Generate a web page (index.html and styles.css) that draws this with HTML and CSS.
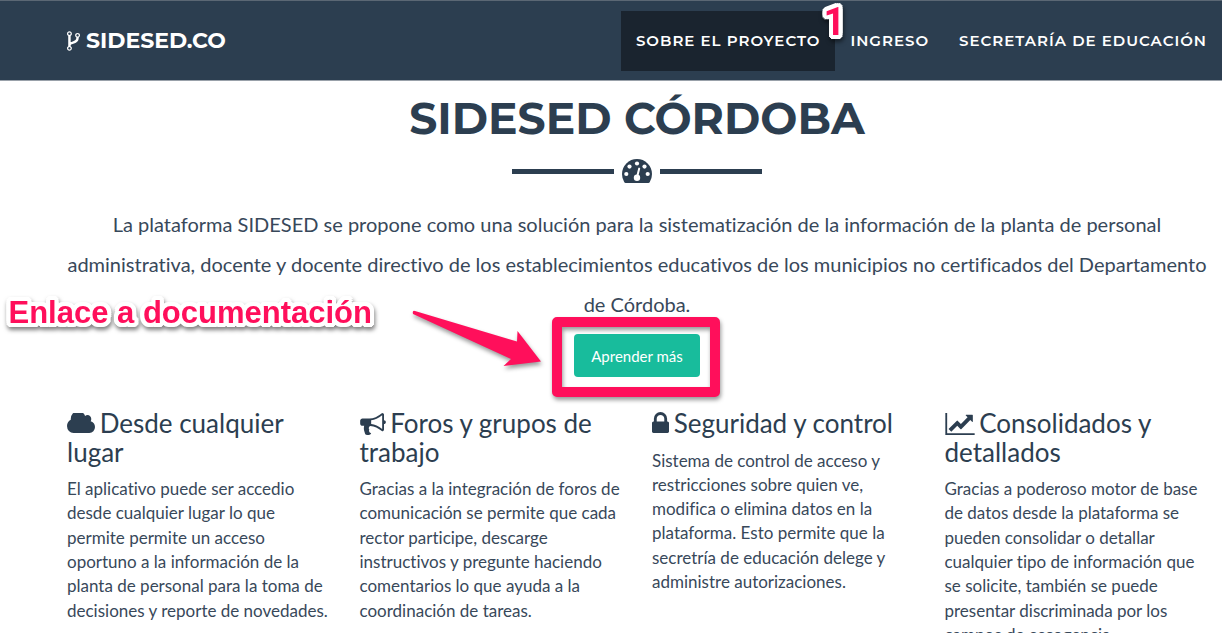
FILE: index.html
```html
<!DOCTYPE html>
<html lang="es">
<head>
<meta charset="utf-8">
<title>SIDESED Córdoba</title>
<link rel="stylesheet" href="styles.css">
</head>
<body>
<header class="navbar">
  <a class="brand" href="#">
    <svg class="brand-icon" viewBox="384 128 1024 1536" aria-hidden="true"><path d="M672 1472q0-40-28-68t-68-28-68 28-28 68 28 68 68 28 68-28 28-68zm0-1152q0-40-28-68t-68-28-68 28-28 68 28 68 68 28 68-28 28-68zm640 128q0-40-28-68t-68-28-68 28-28 68 28 68 68 28 68-28 28-68zm96 0q0 52-26 96.5t-70 69.5q-2 287-226 414-67 38-203 81-128 40-169.5 71t-41.5 100v26q44 25 70 69.5t26 96.5q0 80-56 136t-136 56-136-56-56-136q0-52 26-96.5t70-69.5v-820q-44-25-70-69.5t-26-96.5q0-80 56-136t136-56 136 56 56 136q0 52-26 96.5t-70 69.5v497q54-26 154-57 55-17 87.5-29.5t70.5-31 59-39.5 40.5-51 28-69.5 8.5-91.5q-44-25-70-69.5t-26-96.5q0-80 56-136t136-56 136 56 56 136z"/></svg>
    <span>SIDESED.CO</span>
  </a>
  <nav class="menu">
    <a class="menu-link active" href="#sobre">SOBRE EL PROYECTO<span class="step note">1</span></a>
    <a class="menu-link" href="#ingreso">INGRESO</a>
    <a class="menu-link" href="#secretaria">SECRETARÍA DE EDUCACIÓN</a>
  </nav>
</header>
<main class="about" id="sobre">
  <h1 class="title">SIDESED CÓRDOBA</h1>
  <div class="divider">
    <svg class="gauge" viewBox="0 0 30 25" aria-hidden="true">
      <path class="gauge-body" d="M15 0A15 15 0 0 1 30 15Q30 19.500 27.700 23.200Q27.200 24 26.400 24H3.600Q2.800 24 2.300 23.200Q0 19.500 0 15A15 15 0 0 1 15 0Z"/>
      <circle cx="4.300" cy="15" r="2.100"/><circle cx="7.500" cy="7.600" r="2.100"/><circle cx="15" cy="4.500" r="2.100"/><circle cx="22.500" cy="7.600" r="2.100"/><circle cx="25.700" cy="15" r="2.100"/>
      <circle cx="15" cy="18.700" r="3.200"/><path class="gauge-needle" d="M15.200 17.500L17.200 9.600"/>
    </svg>
  </div>
  <p class="lead">La plataforma SIDESED se propone como una solución para la sistematización de la información de la planta de personal administrativa, docente y docente directivo de los establecimientos educativos de los municipios no certificados del Departamento de Córdoba.</p>
  <div class="action">
    <button class="button" type="button">Aprender más</button>
    <span class="frame"></span>
    <svg class="arrow" viewBox="0 0 130 62" aria-hidden="true"><path d="M3 1L105 31.500L105.500 21L129 51.500L91.500 56L99 49L1 4Q0 0 3 1Z"/></svg>
    <span class="label note">Enlace a documentación</span>
  </div>
  <div class="features">
    <section class="feature">
      <h2 class="feature-title"><svg class="icon cloud" viewBox="0 256 1920 1280" preserveAspectRatio="none" aria-hidden="true"><path d="M1920 1152q0 159-112.500 271.500t-271.500 112.500h-1088q-185 0-316.500-131.500t-131.500-316.500q0-132 71-241.500t187-163.500q-2-28-2-43 0-212 150-362t362-150q158 0 286.500 88t187.500 230q70-62 166-62 106 0 181 75t75 181q0 75-41 138 129 30 213 134.500t84 239.500z"/></svg> Desde cualquier lugar</h2>
      <p class="text">El aplicativo puede ser accedio desde cualquier lugar lo que permite permite un acceso oportuno a la información de la planta de personal para la toma de decisiones y reporte de novedades.</p>
    </section>
    <section class="feature">
      <h2 class="feature-title"><svg class="icon horn" viewBox="0 128 1792 1536" aria-hidden="true"><path d="M1664 640q53 0 90.500 37.500t37.500 90.500-37.500 90.500-90.500 37.500v384q0 52-38 90t-90 38q-417-347-812-380-58 19-91 66t-31 100.500 40 92.500q-20 33-23 65.500t6 58 33.500 55 48 50 61.500 50.500q-29 58-111.500 83t-168.500 11.500-132-55.500q-7-23-29.500-87.500t-32-94.500-23-89-15-101 3.500-98.500 22-110.500h-122q-66 0-113-47t-47-113v-192q0-66 47-113t113-47h480q435 0 896-384 52 0 90 38t38 90v384zm-128 604v-954q-394 302-768 343v270q377 42 768 341z"/></svg> Foros y grupos de trabajo</h2>
      <p class="text">Gracias a la integración de foros de comunicación se permite que cada rector participe, descarge instructivos y pregunte haciendo comentarios lo que ayuda a la coordinación de tareas.</p>
    </section>
    <section class="feature">
      <h2 class="feature-title"><svg class="icon lock" viewBox="320 128 1152 1408" aria-hidden="true"><path d="M640 768h512v-192q0-106-75-181t-181-75-181 75-75 181v192zm832 96v576q0 40-28 68t-68 28h-960q-40 0-68-28t-28-68v-576q0-40 28-68t68-28h32v-192q0-184 132-316t316-132 316 132 132 316v192h32q40 0 68 28t28 68z"/></svg> Seguridad y control</h2>
      <p class="text">Sistema de control de acceso y restricciones sobre quien ve, modifica o elimina datos en la plataforma. Esto permite que la secretría de educación delege y administre autorizaciones.</p>
    </section>
    <section class="feature">
      <h2 class="feature-title"><svg class="icon chart" viewBox="0 128 2048 1536" aria-hidden="true"><path d="M2048 1536v128h-2048v-1536h128v1408h1920zm-128-1248v435q0 21-19.500 29.500t-35.500-7.500l-121-121-633 633q-10 10-23 10t-23-10l-233-233-416 416-192-192 585-585q10-10 23-10t23 10l233 233 464-464-121-121q-16-16-7.500-35.500t29.500-19.500h435q14 0 23 9t9 23z"/></svg> Consolidados y detallados</h2>
      <p class="text">Gracias a poderoso motor de base de datos desde la plataforma se pueden consolidar o detallar cualquier tipo de información que se solicite, también se puede presentar discriminada por los campos de escogencia.</p>
    </section>
  </div>
</main>
</body>
</html>
```
FILE: styles.css
```css
* {
  box-sizing: border-box;
}

body {
  margin: 0;
  background: #fff;
  color: #2c3e50;
  font-family: Lato, sans-serif;
  font-variant-ligatures: none;
  overflow: hidden;
}

.navbar {
  display: flex;
  justify-content: space-between;
  align-items: center;
  height: 81px;
  padding-left: 67px;
  border-top: 1px solid #5b6774;
  border-bottom: 1px solid #99a1aa;
  background: #2c3e50;
  font-family: Montserrat, Inter, sans-serif;
  font-weight: 700;
}

.brand {
  display: flex;
  align-items: center;
  gap: 6px;
  color: #fff;
  font-size: 22px;
  text-decoration: none;
}

.brand-icon {
  width: 13px;
  height: 20px;
  fill: #fff;
}

.menu {
  display: flex;
}

.menu-link {
  position: relative;
  padding: 0 15px;
  color: #fff;
  font-size: 15px;
  font-weight: 600;
  line-height: 60px;
  letter-spacing: 1px;
  text-decoration: none;
}

.menu-link.active {
  background: #1a242f;
}

.note {
  position: absolute;
  color: #ff0f5b;
  font-family: "Liberation Sans", Arial, sans-serif;
  font-weight: 700;
  letter-spacing: 0;
  white-space: nowrap;
  text-shadow:
    4px 0 #fff, -4px 0 #fff, 0 4px #fff, 0 -4px #fff,
    3px 3px #fff, -3px 3px #fff, 3px -3px #fff, -3px -3px #fff,
    4px 2px #fff, -4px 2px #fff, 4px -2px #fff, -4px -2px #fff,
    2px 4px #fff, -2px 4px #fff, 2px -4px #fff, -2px -4px #fff;
  filter: drop-shadow(1px 3px 2px rgba(0, 0, 0, 0.5));
}

.step {
  top: -9px;
  right: -10px;
  z-index: 1;
  font-family: Roboto, sans-serif;
  font-size: 38px;
  line-height: 40px;
}

.about {
  padding: 12px 0 0 52px;
}

.title {
  margin: 0;
  font-family: Montserrat, Inter, sans-serif;
  font-size: 44px;
  font-weight: 700;
  line-height: 50px;
  text-align: center;
}

.divider {
  display: flex;
  justify-content: center;
  align-items: center;
  gap: 8px;
  margin-top: 16px;
}

.divider::before,
.divider::after {
  content: "";
  width: 102px;
  height: 5px;
  background: #2c3e50;
}

.gauge {
  width: 30px;
  height: 25px;
  fill: #fff;
}

.gauge-body {
  fill: #2c3e50;
}

.gauge-needle {
  stroke: #fff;
  stroke-width: 2;
  stroke-linecap: round;
}

.lead {
  margin: 20px 0 10px;
  padding: 0 8px;
  color: #38485a;
  font-size: 20px;
  line-height: 40px;
  text-align: center;
}

.action {
  position: relative;
  width: 126px;
  margin: 0 auto;
}

.button {
  display: block;
  width: 100%;
  height: 43px;
  border: 0;
  border-radius: 4px;
  background: #18bc9c;
  color: #fff;
  font-family: inherit;
  font-size: 15px;
}

.frame {
  position: absolute;
  top: -17px;
  left: -22px;
  width: 168px;
  height: 80px;
  border: 10px solid #ff0f5b;
  border-radius: 5px;
  filter: drop-shadow(1px 3px 2px rgba(0, 0, 0, 0.4));
  pointer-events: none;
}

.arrow {
  position: absolute;
  top: -24px;
  right: 158px;
  width: 130px;
  height: 62px;
  overflow: visible;
  fill: #ff0f5b;
  filter: drop-shadow(1px 3px 2px rgba(0, 0, 0, 0.4));
}

.label {
  top: -39px;
  right: 328px;
  font-size: 31px;
  line-height: 36px;
}

.features {
  display: grid;
  grid-template-columns: repeat(4, 1fr);
  margin-top: 32px;
}

.feature {
  padding: 0 15px;
}

.feature-title {
  margin: 0 0 11px;
  font-size: 26px;
  font-weight: 400;
  line-height: 1.1;
}

.icon {
  height: 21px;
  margin-right: -2px;
  fill: #2c3e50;
}

.cloud {
  width: 28px;
  height: 20px;
}

.horn {
  width: 26px;
  height: 22px;
  vertical-align: -2px;
}

.lock {
  width: 17px;
}

.chart {
  width: 30px;
  height: 22px;
  vertical-align: -2px;
}

.text {
  margin: 0;
  color: #38485a;
  font-size: 17px;
  line-height: 1.43;
}
```
